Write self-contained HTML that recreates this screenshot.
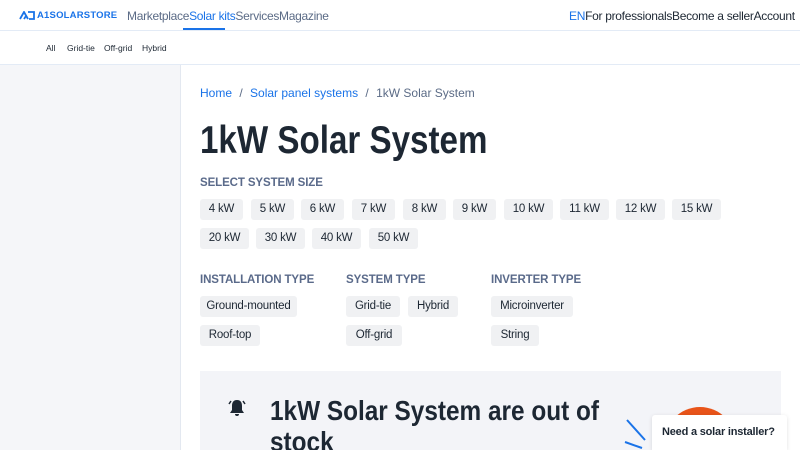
<!DOCTYPE html><html><head><style>
*{margin:0;padding:0;box-sizing:border-box}
html,body{width:800px;height:450px;overflow:hidden}
body{font-family:"Liberation Sans",sans-serif;background:#fff;color:#1d2733;position:relative}
.a{position:absolute}
.row{position:absolute;display:flex;white-space:nowrap;font-size:12px;letter-spacing:-0.3px}
.btn{position:absolute;height:21px;background:#f0f1f3;border-radius:3px;font-size:11.5px;line-height:21px;text-align:center;color:#1d2733;letter-spacing:-0.2px}
.lbl{position:absolute;font-size:11.5px;font-weight:bold;color:#5a6a8a;letter-spacing:-0.1px}
</style></head><body>
<div class="a" style="left:0;top:30px;width:800px;height:1px;background:#e3ebf6"></div>
<div class="a" style="left:0;top:64px;width:800px;height:1px;background:#e3ebf6"></div>
<div class="a" style="left:0;top:65px;width:181px;height:385px;background:#f5f6f9;border-right:1px solid #e3e8f0"></div>
<svg class="a" style="left:19px;top:11px" width="16" height="9" viewBox="0 0 16 9"><path d="M1 8 L5 1 L9 8 M5 8 L7 5 M9 1 L15 1 L15 8 L10 8" fill="none" stroke="#1a73e8" stroke-width="1.8"/></svg>
<div class="a" style="left:37px;top:10px;font-size:9.5px;font-weight:bold;color:#1a73e8;letter-spacing:0.2px">A1SOLARSTORE</div>
<div class="row" style="left:127px;top:9px;color:#5b6b86"><span>Marketplace</span><span style="color:#1a73e8">Solar kits</span><span>Services</span><span>Magazine</span></div>
<div class="a" style="left:183px;top:28px;width:42px;height:2px;background:#1a73e8"></div>
<div class="row" style="left:569px;top:9px;color:#1d2733"><span style="color:#1a73e8">EN</span><span>For professionals</span><span>Become a seller</span><span>Account</span></div>
<div class="a" style="left:46px;top:43px;font-size:8.5px">All</div>
<div class="a" style="left:67px;top:43px;font-size:8.5px">Grid-tie</div>
<div class="a" style="left:104px;top:43px;font-size:8.5px">Off-grid</div>
<div class="a" style="left:142px;top:43px;font-size:8.5px">Hybrid</div>
<div class="a" style="left:200px;top:86px;font-size:12px;color:#1a73e8;white-space:nowrap">Home <span style="color:#5b6b86;margin:0 4px">/</span> Solar panel systems <span style="color:#5b6b86;margin:0 4px">/</span> <span style="color:#5b6b86">1kW Solar System</span></div>
<div class="a" style="left:200px;top:119px;font-size:39px;font-weight:bold;color:#1d2733;white-space:nowrap;transform:scaleX(0.85);transform-origin:left top">1kW Solar System</div>
<div class="lbl" style="left:200px;top:177px">SELECT SYSTEM SIZE</div>
<div class="btn" style="left:200px;top:199px;width:43px">4 kW</div>
<div class="btn" style="left:251px;top:199px;width:43px">5 kW</div>
<div class="btn" style="left:301px;top:199px;width:43px">6 kW</div>
<div class="btn" style="left:352px;top:199px;width:43px">7 kW</div>
<div class="btn" style="left:403px;top:199px;width:43px">8 kW</div>
<div class="btn" style="left:453px;top:199px;width:43px">9 kW</div>
<div class="btn" style="left:504px;top:199px;width:49px">10 kW</div>
<div class="btn" style="left:560px;top:199px;width:49px">11 kW</div>
<div class="btn" style="left:616px;top:199px;width:49px">12 kW</div>
<div class="btn" style="left:672px;top:199px;width:49px">15 kW</div>
<div class="btn" style="left:200px;top:228px;width:49px">20 kW</div>
<div class="btn" style="left:256px;top:228px;width:49px">30 kW</div>
<div class="btn" style="left:312px;top:228px;width:49px">40 kW</div>
<div class="btn" style="left:369px;top:228px;width:49px">50 kW</div>
<div class="lbl" style="left:200px;top:274px">INSTALLATION TYPE</div>
<div class="lbl" style="left:346px;top:274px">SYSTEM TYPE</div>
<div class="lbl" style="left:491px;top:274px">INVERTER TYPE</div>
<div class="btn" style="left:200px;top:296px;width:97px">Ground-mounted</div>
<div class="btn" style="left:200px;top:325px;width:60px">Roof-top</div>
<div class="btn" style="left:346px;top:296px;width:54px">Grid-tie</div>
<div class="btn" style="left:408px;top:296px;width:50px">Hybrid</div>
<div class="btn" style="left:346px;top:325px;width:56px">Off-grid</div>
<div class="btn" style="left:491px;top:296px;width:82px">Microinverter</div>
<div class="btn" style="left:491px;top:325px;width:48px">String</div>
<div class="a" style="left:200px;top:371px;width:581px;height:79px;background:#f3f4f8"></div>
<svg class="a" style="left:227px;top:398px" width="20" height="20" viewBox="0 0 20 20"><path d="M10 2 C6 2 5 5 5 8 L5 12 L3 15 L17 15 L15 12 L15 8 C15 5 14 2 10 2Z M8 16 A2 2 0 0 0 12 16Z" fill="#1d2733"/><path d="M4 3 L2 6 M16 3 L18 6" stroke="#1d2733" stroke-width="1.5"/></svg>
<div class="a" style="left:270px;top:395px;font-size:28px;font-weight:bold;line-height:31px;color:#1d2733;width:390px;transform:scaleX(0.87);transform-origin:left top">1kW Solar System are out of stock</div>
<svg class="a" style="left:620px;top:400px" width="180" height="50"><g stroke="#1a73e8" stroke-width="2"><line x1="7" y1="20" x2="25" y2="40"/><line x1="5" y1="42" x2="22" y2="48"/><line x1="125" y1="40" x2="138" y2="32"/><line x1="128" y1="50" x2="150" y2="42"/></g><circle cx="80" cy="43" r="36" fill="#e8541a"/></svg>
<div class="a" style="left:652px;top:415px;width:135px;height:35px;background:#fff;border-radius:3px 3px 0 0;box-shadow:0 1px 4px rgba(0,0,0,.12)"></div>
<div class="a" style="left:662px;top:426px;font-size:11px;font-weight:bold;color:#1d2733;letter-spacing:-0.2px">Need a solar installer?</div>
</body></html>
